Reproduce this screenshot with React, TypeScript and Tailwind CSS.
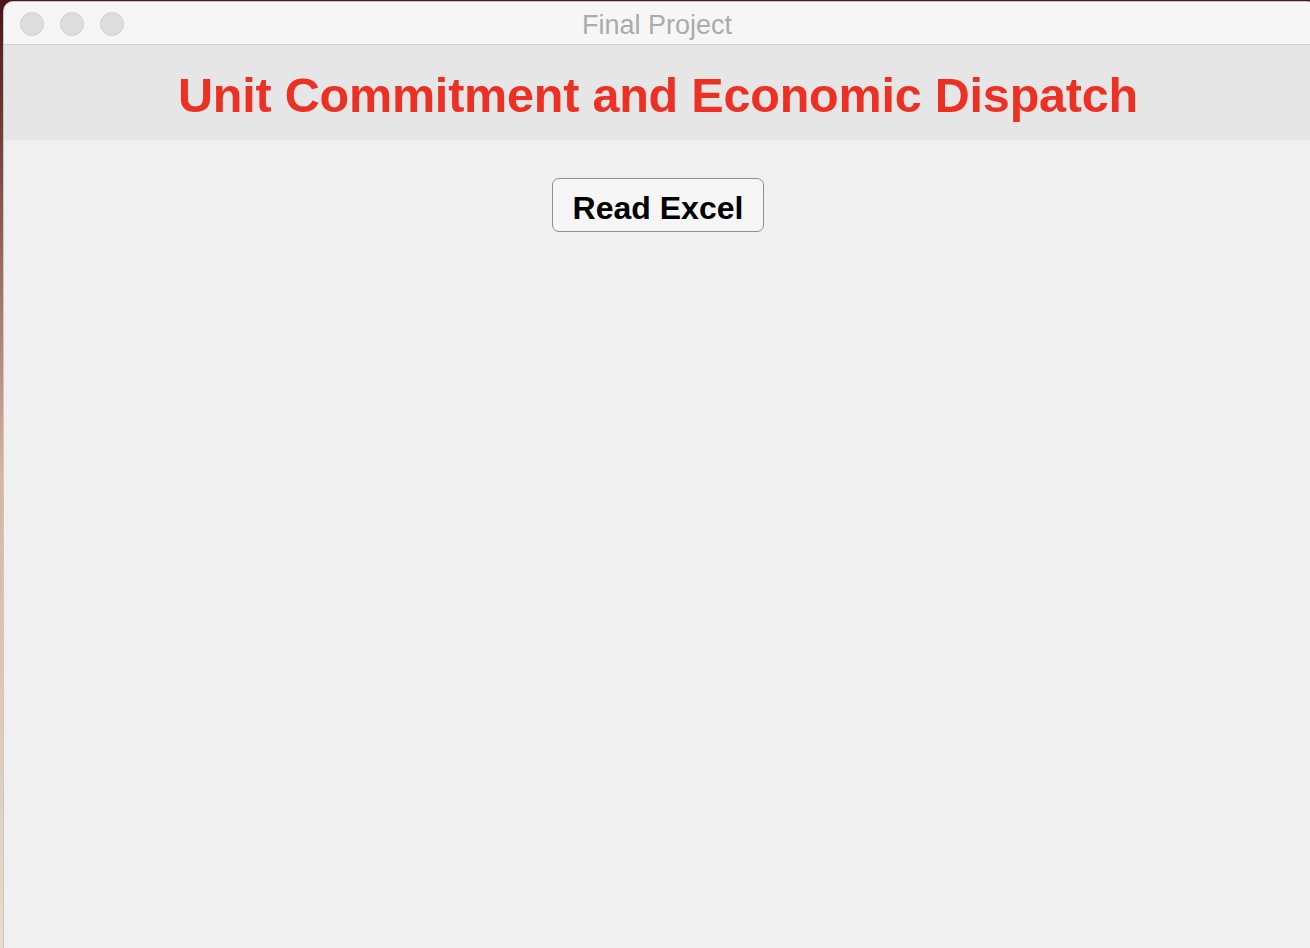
export default function App() {
  return (
    <div className="h-[948px] w-[1310px] overflow-hidden bg-gradient-to-b from-[#4a1418] via-[#d8b4a2] to-[#e6dccd] pl-[4px] pt-[2px] font-['Liberation_Sans',Arial,sans-serif]">
      <div className="flex h-[960px] w-[1312px] flex-col overflow-hidden rounded-t-[9px] bg-[#f0f0f0] shadow-[0_0_0_1px_#c8c8c8]">
        {/* title bar */}
        <div className="relative flex h-[43px] shrink-0 items-center justify-center border-b border-[#d4d4d4] bg-[#f6f6f6]">
          <div className="absolute left-[16px] top-[10px] flex gap-[16px]">
            <span className="size-[24px] rounded-full border border-[#d0d0d0] bg-[#dedede]" />
            <span className="size-[24px] rounded-full border border-[#d0d0d0] bg-[#dedede]" />
            <span className="size-[24px] rounded-full border border-[#d0d0d0] bg-[#dedede]" />
          </div>
          <span className="pr-[6px] pt-[4px] text-[27px] leading-none text-[#ababab]">Final Project</span>
        </div>

        {/* header band */}
        <div className="flex h-[95px] shrink-0 items-center justify-center bg-[#e6e6e6] pr-[4px] pt-[6px]">
          <h1 className="text-[48.5px] font-bold leading-none tracking-[-0.2px] text-[#ec3124]">
            Unit Commitment and Economic Dispatch
          </h1>
        </div>

        {/* body */}
        <div className="flex flex-1 justify-center pr-[4px] pt-[38px]">
          <button className="h-[54px] w-[212px] rounded-[7px] border-[1.5px] border-[#8f8f8f] bg-[#f6f6f6] pt-[5px] text-[32px] font-bold leading-none text-black">
            Read Excel
          </button>
        </div>
      </div>
    </div>
  );
}
